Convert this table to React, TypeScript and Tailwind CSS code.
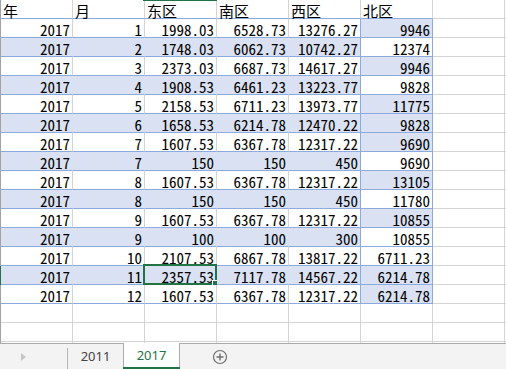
import React from "react";

const rows: (string | number)[][] = [
  [2017, 1, "1998.03", "6528.73", "13276.27", "9946"],
  [2017, 2, "1748.03", "6062.73", "10742.27", "12374"],
  [2017, 3, "2373.03", "6687.73", "14617.27", "9946"],
  [2017, 4, "1908.53", "6461.23", "13223.77", "9828"],
  [2017, 5, "2158.53", "6711.23", "13973.77", "11775"],
  [2017, 6, "1658.53", "6214.78", "12470.22", "9828"],
  [2017, 7, "1607.53", "6367.78", "12317.22", "9690"],
  [2017, 7, "150", "150", "450", "9690"],
  [2017, 8, "1607.53", "6367.78", "12317.22", "13105"],
  [2017, 8, "150", "150", "450", "11780"],
  [2017, 9, "1607.53", "6367.78", "12317.22", "10855"],
  [2017, 9, "100", "100", "300", "10855"],
  [2017, 10, "2107.53", "6867.78", "13817.22", "6711.23"],
  [2017, 11, "2357.53", "7117.78", "14567.22", "6214.78"],
  [2017, 12, "1607.53", "6367.78", "12317.22", "6214.78"],
];
const north = [1, 0, 1, 0, 1, 1, 1, 0, 1, 0, 1, 0, 0, 1, 1];
const headers = ["年", "月", "东区", "南区", "西区", "北区"];

const base =
  "relative w-[72px] h-[19px] shrink-0 border-r border-b flex items-center pt-[2px] leading-none whitespace-nowrap";

function HeaderRow() {
  return (
    <div className="flex h-[19px] shrink-0 border-l border-l-[#a3a3a3]">
      {headers.map((h, i) => (
        <div
          key={i}
          className={`${base} justify-start pl-[2px] bg-white border-r-[#d4d4d4] border-b-[#8ea9db]`}
        >
          {i === 2 && (
            <div className="absolute top-0 -left-[2px] -right-[1px] h-[1px] bg-[#217346]" />
          )}
          {h}
        </div>
      ))}
      <div className={`${base} border-r-[#d4d4d4] border-b-[#d4d4d4]`} />
      <div className="flex-1 h-[19px] border-b border-b-[#d4d4d4]" />
    </div>
  );
}

function DataRow({ r, idx }: { r: (string | number)[]; idx: number }) {
  const band = idx % 2 === 1;
  const selected = idx === 13;
  const fill = band ? "bg-[#d9e1f2]" : "bg-white";
  return (
    <div
      className={`flex h-[19px] shrink-0 border-l ${
        selected ? "border-l-[#217346]" : "border-l-[#a3a3a3]"
      }`}
    >
      {r.slice(0, 4).map((v, i) => (
        <div
          key={i}
          className={`${base} justify-end pr-[2px] border-b-[#8ea9db] ${
            band ? "bg-[#d9e1f2] border-r-[#d9e1f2]" : "bg-white border-r-[#d4d4d4]"
          }`}
        >
          {v}
          {selected && i === 2 && (
            <div className="absolute -left-[2px] -top-[2px] -right-[1px] -bottom-[1px] border-2 border-[#217346]">
              <div className="absolute -right-[3px] -bottom-[3px] w-[6px] h-[6px] bg-[#217346] border border-white" />
            </div>
          )}
        </div>
      ))}
      <div className={`${base} justify-end pr-[2px] border-r-[#8ea9db] border-b-[#8ea9db] ${fill}`}>
        {r[4]}
      </div>
      <div
        className={`${base} justify-end pr-[2px] border-r-[#8ea9db] border-b-[#8ea9db] ${
          north[idx] ? "bg-[#d9e1f2]" : "bg-white"
        }`}
      >
        {r[5]}
      </div>
      <div className={`${base} border-r-[#d4d4d4] border-b-[#d4d4d4]`} />
      <div className="flex-1 h-[19px] border-b border-b-[#d4d4d4]" />
    </div>
  );
}

function EmptyRow() {
  return (
    <div className="flex h-[19px] shrink-0 border-l border-l-[#a3a3a3]">
      {[0, 1, 2, 3, 4, 5, 6].map((i) => (
        <div key={i} className={`${base} border-r-[#d4d4d4] border-b-[#d4d4d4]`} />
      ))}
      <div className="flex-1 h-[19px] border-b border-b-[#d4d4d4]" />
    </div>
  );
}

export default function App() {
  return (
    <div className="w-[506px] h-[369px] overflow-hidden bg-white flex flex-col text-black">
      <div className="h-[343px] shrink-0 overflow-hidden flex flex-col text-[15px] font-['Noto_Sans_Mono_CJK_SC','Noto_Sans_CJK_SC','Liberation_Mono',monospace]">
        <HeaderRow />
        {rows.map((r, i) => (
          <DataRow key={i} r={r} idx={i} />
        ))}
        <EmptyRow />
        <EmptyRow />
        <EmptyRow />
      </div>
      <div className="h-[26px] shrink-0 flex bg-[#f3f3f3] text-[13px] font-['Segoe_UI','Noto_Sans','Liberation_Sans',sans-serif]">
        <div className="w-[67px] shrink-0 border-t border-t-[#ababab] flex items-center pl-[21px]">
          <svg width="5" height="8" viewBox="0 0 5 8">
            <path d="M0 0 L5 4 L0 8 Z" fill="#c6c6c6" />
          </svg>
        </div>
        <div className="w-[56px] shrink-0 border-t border-t-[#ababab] flex">
          <div className="w-[1px] mt-[4px] bg-[#b4b4b4]" />
          <div className="flex-1 flex items-center justify-center text-[#444]">2011</div>
        </div>
        <div className="relative w-[57px] shrink-0 bg-white border-x border-x-[#ababab] flex items-center justify-center text-[#217346]">
          2017
          <div className="absolute left-[-1px] right-[-1px] bottom-0 h-[2px] bg-[#217346]" />
        </div>
        <div className="flex-1 border-t border-t-[#ababab] flex items-center pl-[32px]">
          <svg width="16" height="16" viewBox="0 0 16 16">
            <circle cx="8" cy="8" r="6.5" fill="none" stroke="#6e6e6e" strokeWidth="1.2" />
            <path d="M8 4.5 V11.5 M4.5 8 H11.5" stroke="#6e6e6e" strokeWidth="1.4" />
          </svg>
        </div>
      </div>
    </div>
  );
}
